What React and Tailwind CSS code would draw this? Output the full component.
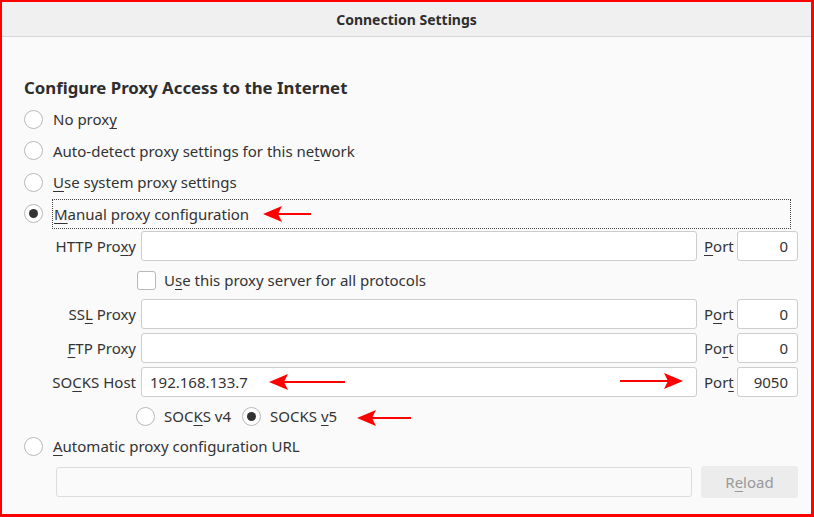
import React from "react";

function Radio({ checked }) {
  return (
    <span className="flex h-[19px] w-[19px] shrink-0 items-center justify-center rounded-full border border-[#b8b8b8] bg-white">
      {checked && <span className="h-[9px] w-[9px] rounded-full bg-[#333]" />}
    </span>
  );
}

function U({ children }) {
  return <span className="underline underline-offset-[3px] decoration-1">{children}</span>;
}

function Arrow({ className, dir = "left", length }) {
  const w = length;
  const h = 18;
  const head =
    dir === "left"
      ? `0,9 19,1 15,9 19,17`
      : `${w},9 ${w - 19},1 ${w - 15},9 ${w - 19},17`;
  const line = dir === "left" ? `M14 9 L${w} 9` : `M0 9 L${w - 14} 9`;
  return (
    <svg className={`absolute ${className}`} width={w} height={h} viewBox={`0 0 ${w} ${h}`}>
      <path d={line} stroke="#f00" strokeWidth="2" />
      <polygon points={head} fill="#f00" />
    </svg>
  );
}

function ProxyRow({ label, value = "", port }) {
  return (
    <div className="flex h-[30px] items-center">
      <span className="w-[117px] shrink-0 pr-[5px] text-right">{label}</span>
      <div className="flex h-[30px] w-[556px] shrink-0 items-center rounded-[3px] border border-[#cdcdcd] bg-white px-[8px]">
        {value}
      </div>
      <span className="w-[40px] shrink-0 pl-[7px]">{port.label}</span>
      <div className="flex h-[30px] w-[61px] shrink-0 items-center justify-end rounded-[3px] border border-[#cdcdcd] bg-white pr-[9px]">
        {port.value}
      </div>
    </div>
  );
}

export default function App() {
  return (
    <div
      className="relative h-[517px] w-[814px] border-t-2 border-l-2 border-r-[3px] border-b-[3px] border-[#ff0000] bg-[#fafafa] text-[15px] text-[#333]"
      style={{ fontFamily: '"Noto Sans", sans-serif' }}
    >
      {/* title bar */}
      <div className="flex h-[35px] items-center justify-center border-b border-[#d6d6d6] bg-[#f0f0f0] text-[14px] font-bold text-[#2e2e2e]">
        Connection Settings
      </div>

      <div className="flex flex-col pl-[22px] pr-[12px] pt-[39px]">
        <h1 className="h-6 text-[16.8px] font-bold leading-6 text-[#2e2e2e]">
          Configure Proxy Access to the Internet
        </h1>

        <div className="mt-[3.5px] flex flex-col">
          <div className="flex h-[31.5px] items-center gap-[10px]">
            <Radio />
            <span>
              No prox<U>y</U>
            </span>
          </div>
          <div className="flex h-[31.5px] items-center gap-[10px]">
            <Radio />
            <span>
              Auto-detect proxy settings for this ne<U>t</U>work
            </span>
          </div>
          <div className="flex h-[31.5px] items-center gap-[10px]">
            <Radio />
            <span>
              <U>U</U>se system proxy settings
            </span>
          </div>
          <div className="flex h-[31.5px] items-center gap-[9px]">
            <Radio checked />
            <span className="mr-[8px] flex h-[30px] flex-1 items-center border border-dotted border-[#444] pl-[1px]">
              <U>M</U>anual proxy configuration
            </span>
          </div>
        </div>

        <div className="mt-[1.5px] flex flex-col">
          <ProxyRow
            label={
              <>
                HTTP Pro<U>x</U>y
              </>
            }
            port={{ label: <><U>P</U>ort</>, value: "0" }}
          />
          <div className="flex h-[38px] items-center pl-[113px]">
            <span className="h-[19px] w-[19px] rounded-[3px] border border-[#b8b8b8] bg-white" />
            <span className="ml-[8px]">
              U<U>s</U>e this proxy server for all protocols
            </span>
          </div>
          <ProxyRow
            label={
              <>
                SS<U>L</U> Proxy
              </>
            }
            port={{ label: <>P<U>o</U>rt</>, value: "0" }}
          />
          <div className="h-[4px]" />
          <ProxyRow
            label={
              <>
                <U>F</U>TP Proxy
              </>
            }
            port={{ label: <>Po<U>r</U>t</>, value: "0" }}
          />
          <div className="h-[4px]" />
          <ProxyRow
            label={
              <>
                SO<U>C</U>KS Host
              </>
            }
            value="192.168.133.7"
            port={{ label: <>Por<U>t</U></>, value: "9050" }}
          />
          <div className="mt-[4px] flex h-[30px] items-center pl-[112px]">
            <Radio />
            <span className="ml-[9px]">
              SOC<U>K</U>S v4
            </span>
            <span className="ml-[11px]">
              <Radio checked />
            </span>
            <span className="ml-[9px]">
              SOCKS <U>v</U>5
            </span>
          </div>
        </div>

        <div className="flex h-[30px] items-center gap-[10px]">
          <Radio />
          <span>
            <U>A</U>utomatic proxy configuration URL
          </span>
        </div>

        <div className="mt-[5px] flex items-center">
          <div className="ml-[32px] h-[30px] w-[636px] shrink-0 rounded-[3px] border border-[#dcdcdc] bg-[#fafafa]" />
          <div className="ml-[9px] flex h-[32px] w-[97px] shrink-0 items-center justify-center rounded-[3px] bg-[#ececec] text-[#999]">
            R<U>e</U>load
          </div>
        </div>
      </div>

      <Arrow className="left-[261px] top-[203px]" dir="left" length={48} />
      <Arrow className="left-[267px] top-[371px]" dir="left" length={76} />
      <Arrow className="left-[618px] top-[370px]" dir="right" length={63} />
      <Arrow className="left-[355px] top-[407px]" dir="left" length={54} />
    </div>
  );
}
